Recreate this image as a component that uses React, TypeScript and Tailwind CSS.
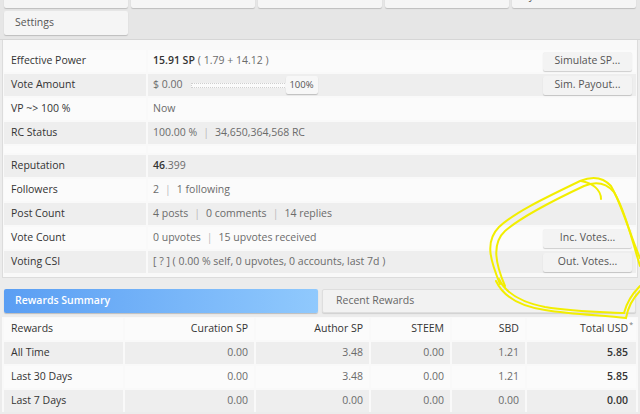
import React from "react";

const F = { fontFamily: '"Open Sans", "Noto Sans", sans-serif' };

function Btn({ children, className = "" }: { children: React.ReactNode; className?: string }) {
  return (
    <div
      className={
        "h-[19px] w-[89px] flex items-center justify-center rounded-[2px] bg-[#f3f3f3] text-[10.5px] text-[#555] shadow-[0_1px_1px_rgba(0,0,0,0.18)] " +
        className
      }
    >
      {children}
    </div>
  );
}

function Row({
  label,
  gray,
  children,
  button,
}: {
  label: string;
  gray?: boolean;
  children: React.ReactNode;
  button?: string;
}) {
  const bg = gray ? "bg-[#eeeeee]" : "bg-[#fbfbfb]";
  return (
    <div className="flex h-[22px] gap-[2px]">
      <div className={"w-[142px] shrink-0 flex items-center pl-[7px] text-[10.5px] text-[#333] " + bg}>{label}</div>
      <div className={"flex-1 flex items-center pl-[5px] pr-[4px] text-[10.5px] text-[#6b6b6b] " + bg}>
        <div className="flex-1 flex items-center">{children}</div>
        {button && <Btn>{button}</Btn>}
      </div>
    </div>
  );
}

const Sep = () => <span className="mx-[6px] text-[#bbb]">|</span>;

function Annotation() {
  return (
    <svg className="absolute left-0 top-0 pointer-events-none" width="640" height="414" viewBox="0 0 640 414">
      <g fill="none" stroke="#f2ee00" strokeWidth="2" strokeLinecap="round">
        <path d="M 500 284 C 491 262, 484 242, 499 227 C 515 212, 545 198, 580 181 C 592 176, 603 177, 611 186 C 622 205, 630 235, 640 258" />
        <path d="M 505 286 C 496 265, 491 244, 505 231 C 521 217, 550 202, 584 186 C 596 181, 606 183, 614 192 C 625 211, 632 240, 640 266" />
        <path d="M 581 181 C 593 183, 601 190, 601 199" />
        <path d="M 499 279 C 505 292, 520 302, 545 307 C 575 312, 605 312, 624 313 C 626 305, 630 296, 640 286" />
        <path d="M 496 281 C 503 296, 518 306, 545 310 C 575 315, 605 315, 626 318 C 628 307, 633 298, 640 291" />
      </g>
    </svg>
  );
}

export default function App() {
  const navTop = ["Followers", "Mentions", "Orders", "Market Info", "System Info"];
  const rewards = [
    ["All Time", "0.00", "3.48", "0.00", "1.21", "5.85"],
    ["Last 30 Days", "0.00", "3.48", "0.00", "1.21", "5.85"],
    ["Last 7 Days", "0.00", "0.00", "0.00", "0.00", "0.00"],
  ];
  const colW = ["w-[119px]", "w-[129px]", "w-[113px]", "w-[79px]", "w-[73px]", "flex-1"];
  return (
    <div className="relative w-[640px] h-[414px] overflow-hidden bg-[#ececec]" style={F}>
      {/* nav */}
      <div className="bg-[#e6e6e6] border-b border-[#d6d6d6] px-[4px] pb-[4px]">
        <div className="grid grid-cols-5 gap-x-[3px] gap-y-[3px] mt-[-16px]">
          {navTop.map((n) => (
            <div
              key={n}
              className="h-[24px] flex items-center pl-[11px] rounded-[2px] bg-[#f5f5f5] text-[10.5px] text-[#555] shadow-[0_1px_1px_rgba(0,0,0,0.18)]"
            >
              {n}
            </div>
          ))}
          <div className="h-[24px] flex items-center pl-[11px] rounded-[2px] bg-[#f5f5f5] text-[10.5px] text-[#555] shadow-[0_1px_1px_rgba(0,0,0,0.18)]">
            Settings
          </div>
        </div>
      </div>

      {/* main info panel */}
      <div className="mx-[2px] bg-[#f9f9f9] border-x border-b border-[#dcdcdc] pt-[10px] pb-[4px] px-[1px]">
        <div className="flex flex-col gap-[2px]">
          <Row label="Effective Power" button="Simulate SP...">
            <span className="font-semibold text-[#333]">15.91 SP</span>
            <span className="ml-[3px]">( 1.79 + 14.12 )</span>
          </Row>
          <Row label="Vote Amount" gray button="Sim. Payout...">
            <span>$ 0.00</span>
            <div className="relative ml-[8px] w-[127px] h-[18px] flex items-center">
              <div className="h-[5px] w-[120px] border border-dotted border-[#cfcfcf] bg-[#fbfbfb]" />
              <div className="absolute right-0 top-0 h-[18px] w-[32px] flex items-center justify-center rounded-[2px] bg-[#f7f7f7] text-[9.5px] text-[#555] shadow-[0_1px_1px_rgba(0,0,0,0.2)]">
                100%
              </div>
            </div>
          </Row>
          <Row label="VP ~> 100 %">Now</Row>
          <Row label="RC Status" gray>
            100.00 %<Sep />34,650,364,568 RC
          </Row>
          <div className="flex h-[7px] gap-[2px]">
            <div className="w-[142px] bg-[#fbfbfb]" />
            <div className="flex-1 bg-[#fbfbfb]" />
          </div>
          <Row label="Reputation" gray>
            <span className="font-semibold text-[#333]">46</span>.399
          </Row>
          <Row label="Followers">
            2<Sep />1 following
          </Row>
          <Row label="Post Count" gray>
            4 posts<Sep />0 comments<Sep />14 replies
          </Row>
          <Row label="Vote Count" button="Inc. Votes...">
            0 upvotes<Sep />15 upvotes received
          </Row>
          <Row label="Voting CSI" gray button="Out. Votes...">
            [ ? ] ( 0.00 % self, 0 upvotes, 0 accounts, last 7d )
          </Row>
        </div>
      </div>

      {/* tabs */}
      <div className="mt-[11px] px-[4px] flex gap-[4px] h-[24px]">
        <div className="w-[314px] flex items-center pl-[11px] rounded-[2px] bg-linear-to-r from-[#5a9ef3] to-[#90c9fd] text-[10.5px] font-semibold text-white shadow-[0_1px_1px_rgba(0,0,0,0.2)]">
          Rewards Summary
        </div>
        <div className="flex-1 flex items-center pl-[13px] rounded-[2px] bg-[#f2f2f2] border border-[#dedede] text-[10.5px] text-[#666] shadow-[0_1px_1px_rgba(0,0,0,0.12)]">
          Recent Rewards
        </div>
      </div>

      {/* rewards table */}
      <div className="mt-[4px] mx-[2px] bg-[#f9f9f9] pt-[1px] px-[2px] flex flex-col gap-[2px]">
        <div className="flex h-[22px] gap-[2px] text-[10.5px] text-[#333]">
          {["Rewards", "Curation SP", "Author SP", "STEEM", "SBD", "Total USD"].map((h, i) => (
            <div
              key={h}
              className={
                colW[i] +
                " bg-[#fbfbfb] flex items-center " +
                (i === 0 ? "pl-[7px]" : i === 5 ? "justify-end pr-[3px]" : "justify-end pr-[6px]")
              }
            >
              {h}
              {i === 5 && <span className="relative top-[-4px] ml-[1px] text-[7px] text-[#777]">*</span>}
            </div>
          ))}
        </div>
        {rewards.map((r, ri) => (
          <div key={r[0]} className="flex h-[22px] gap-[2px] text-[10.5px]">
            {r.map((c, i) => (
              <div
                key={i}
                className={
                  colW[i] +
                  (ri % 2 === 0 ? " bg-[#eeeeee]" : " bg-[#fbfbfb]") +
                  " flex items-center " +
                  (i === 0
                    ? "pl-[7px] text-[#333]"
                    : i === 5
                    ? "justify-end pr-[8px] text-[#333] font-semibold"
                    : "justify-end pr-[6px] text-[#6b6b6b]")
                }
              >
                {c}
              </div>
            ))}
          </div>
        ))}
      </div>

      <Annotation />
    </div>
  );
}
